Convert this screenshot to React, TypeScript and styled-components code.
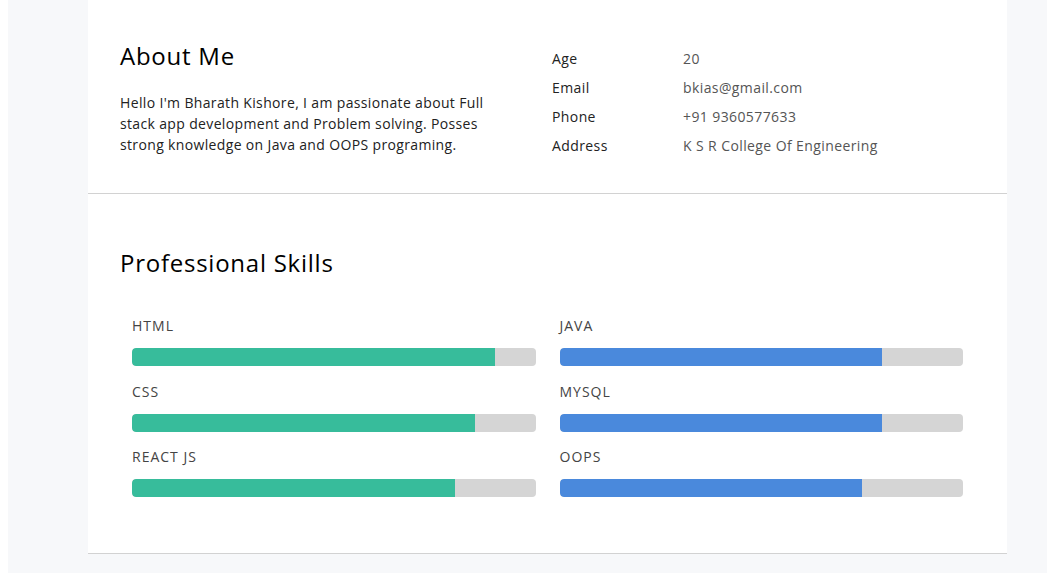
import styled, { createGlobalStyle } from 'styled-components'

const GlobalStyle = createGlobalStyle`
  html, body {
    margin: 0;
    padding: 0;
    background: #ffffff;
  }
  body {
    font-family: "Open Sans", "Noto Sans", sans-serif;
    overflow: hidden;
  }
`

const skillsLeft = [
  { name: 'HTML', level: 90 },
  { name: 'CSS', level: 85 },
  { name: 'REACT JS', level: 80 },
]

const skillsRight = [
  { name: 'JAVA', level: 80 },
  { name: 'MYSQL', level: 80 },
  { name: 'OOPS', level: 75 },
]

const info = [
  { label: 'Age', value: '20' },
  { label: 'Email', value: 'bkias@gmail.com' },
  { label: 'Phone', value: '+91 9360577633' },
  { label: 'Address', value: 'K S R College Of Engineering' },
]

type Skill = { name: string; level: number }

const SkillColumn = ({ skills, color }: { skills: Skill[]; color: string }) => (
  <SkillList>
    {skills.map((skill) => (
      <SkillItem key={skill.name}>
        <SkillName>{skill.name}</SkillName>
        <Track>
          <Fill $color={color} style={{ width: `${skill.level}%` }} />
        </Track>
      </SkillItem>
    ))}
  </SkillList>
)

export default function App() {
  return (
    <>
      <GlobalStyle />
      <Page>
        <Card>
          <AboutSection>
            <AboutText>
              <Title>About Me</Title>
              <Bio>
                Hello I'm Bharath Kishore, I am passionate about Full stack app development and
                Problem solving. Posses strong knowledge on Java and OOPS programing.
              </Bio>
            </AboutText>
            <InfoList>
              {info.map((row) => (
                <InfoRow key={row.label}>
                  <InfoLabel>{row.label}</InfoLabel>
                  <InfoValue>{row.value}</InfoValue>
                </InfoRow>
              ))}
            </InfoList>
          </AboutSection>
          <SkillsSection>
            <Title>Professional Skills</Title>
            <SkillsGrid>
              <SkillColumn skills={skillsLeft} color="#37bc9b" />
              <SkillColumn skills={skillsRight} color="#4a89dc" />
            </SkillsGrid>
          </SkillsSection>
        </Card>
      </Page>
    </>
  )
}

const Page = styled.main`
  margin-left: 8px;
  min-height: 100vh;
  background: #f7f8fa;
  padding-left: 80px;
`

const Card = styled.div`
  width: 919px;
  background: #ffffff;
`

const AboutSection = styled.section`
  display: grid;
  grid-template-columns: 432px 1fr;
  padding: 38px 32px 33px;
  border-bottom: 1px solid #d2d2d2;
`

const AboutText = styled.div`
  width: 390px;
`

const Title = styled.h2`
  margin: 0;
  font-size: 24px;
  line-height: 36px;
  font-weight: 400;
  letter-spacing: 0.75px;
  color: #000000;
`

const Bio = styled.p`
  margin: 18px 0 0;
  font-size: 14px;
  line-height: 21px;
  letter-spacing: 0.35px;
  color: #222222;
`

const InfoList = styled.div`
  display: flex;
  flex-direction: column;
  padding-top: 6px;
`

const InfoRow = styled.div`
  display: grid;
  grid-template-columns: 131px 1fr;
  height: 29px;
  align-items: center;
  font-size: 14px;
  letter-spacing: 0.4px;
`

const InfoLabel = styled.span`
  color: #222222;
`

const InfoValue = styled.span`
  color: #555555;
`

const SkillsSection = styled.section`
  padding: 51px 32px 56px;
  border-bottom: 1px solid #d2d2d2;
`

const SkillsGrid = styled.div`
  display: grid;
  grid-template-columns: 1fr 1fr;
  gap: 24px;
  padding: 34px 12px 0;
`

const SkillList = styled.div`
  display: flex;
  flex-direction: column;
  gap: 14.5px;
`

const SkillItem = styled.div`
  display: flex;
  flex-direction: column;
  gap: 12px;
`

const SkillName = styled.span`
  font-size: 14px;
  line-height: 21px;
  letter-spacing: 1px;
  color: #444444;
`

const Track = styled.div`
  height: 18px;
  border-radius: 4px;
  background: #d5d5d5;
  overflow: hidden;
`

const Fill = styled.div<{ $color: string }>`
  height: 100%;
  background: ${(p) => p.$color};
  border-radius: 4px 0 0 4px;
`
